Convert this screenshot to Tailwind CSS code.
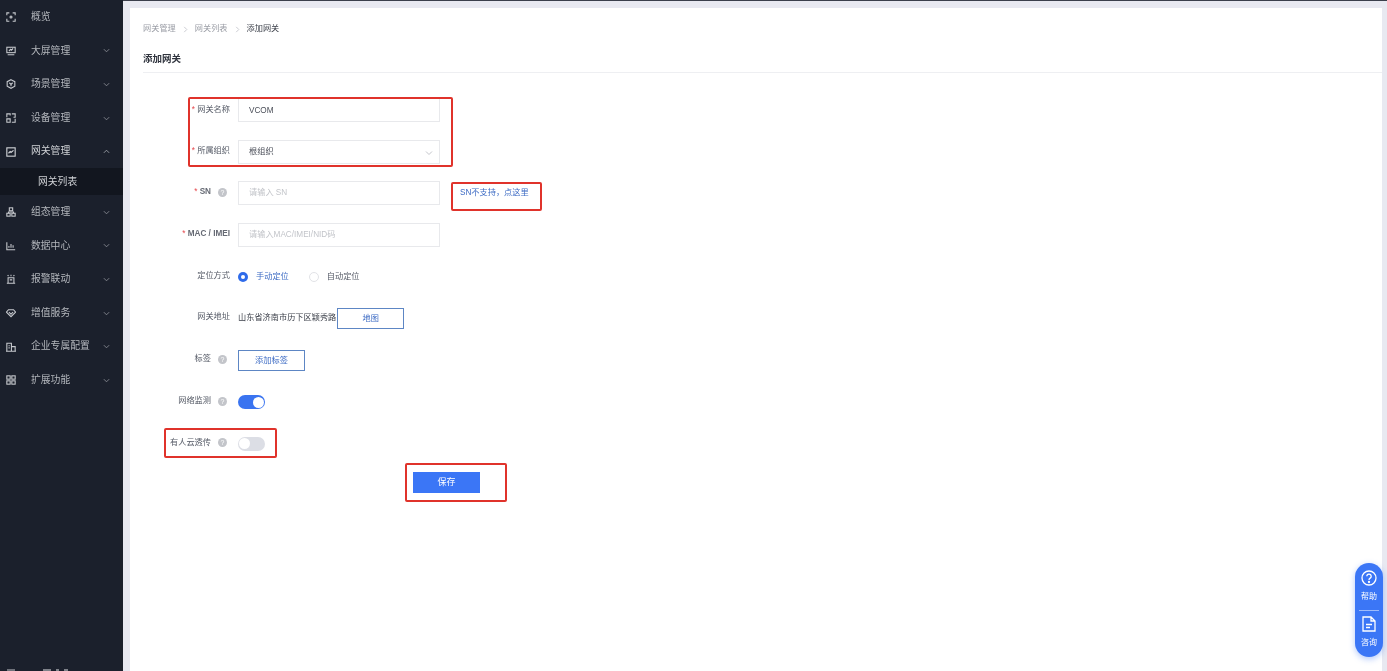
<!DOCTYPE html>
<html>
  <head>
    <meta charset="utf-8" />
    <title>添加网关</title>
    <script src="https://cdn.jsdelivr.net/npm/@tailwindcss/browser@4"></script>
  </head>
  <body class="overflow-hidden">
    <div id="app" class="relative flex h-[671px] w-[1387px] overflow-hidden bg-[#e8e9f1] text-[8.2px] text-[#555a66] blur-[0.35px] font-['Liberation_Sans','Noto_Sans_CJK_SC',sans-serif]">

      <!-- sidebar -->
      <div class="relative w-[123px] shrink-0 bg-[#1b202c] pt-[0.5px] text-[9.8px] text-[#b4b7bd]">
        <a class="flex h-[33.6px] items-center">
          <svg class="mx-[6px] h-[10px] w-[10px]" viewBox="0 0 12 12" fill="none" stroke="#c6c8cd" stroke-width="1.3"><path d="M1 4V1h3M8 1h3v3M11 8v3H8M4 11H1V8"/><circle cx="6" cy="6" r="1.2"/></svg>
          <span class="ml-[9px]">概览</span>
        </a>
        <a class="flex h-[33.6px] items-center">
          <svg class="mx-[6px] h-[10px] w-[10px]" viewBox="0 0 12 12" fill="none" stroke="#c6c8cd" stroke-width="1.3"><rect x="1" y="1.5" width="10" height="6.5"/><path d="M3.5 6l2-2 1 1 2-2M2 10.5h8"/></svg>
          <span class="ml-[9px]">大屏管理</span>
          <svg class="ml-auto mr-[13px] h-[7px] w-[7px]" viewBox="0 0 8 8" fill="none" stroke="#8b8e96"><path d="M1 2.5l3 3 3-3"/></svg>
        </a>
        <a class="flex h-[33.6px] items-center">
          <svg class="mx-[6px] h-[10px] w-[10px]" viewBox="0 0 12 12" fill="none" stroke="#c6c8cd" stroke-width="1.3"><path d="M6 .8l4.6 2.4v5.4L6 11.2 1.4 8.6V3.2z"/><path d="M4 4.5l2 2 2-2M6 6.5v2.2"/></svg>
          <span class="ml-[9px]">场景管理</span>
          <svg class="ml-auto mr-[13px] h-[7px] w-[7px]" viewBox="0 0 8 8" fill="none" stroke="#8b8e96"><path d="M1 2.5l3 3 3-3"/></svg>
        </a>
        <a class="flex h-[33.6px] items-center">
          <svg class="mx-[6px] h-[10px] w-[10px]" viewBox="0 0 12 12" fill="none" stroke="#c6c8cd" stroke-width="1.3"><path d="M1 5V1h4v2M7 1h4v4H9M1 7h4v4H1zM7 11h4V7"/></svg>
          <span class="ml-[9px]">设备管理</span>
          <svg class="ml-auto mr-[13px] h-[7px] w-[7px]" viewBox="0 0 8 8" fill="none" stroke="#8b8e96"><path d="M1 2.5l3 3 3-3"/></svg>
        </a>
        <a class="flex h-[33.6px] items-center">
          <svg class="mx-[6px] h-[10px] w-[10px]" viewBox="0 0 12 12" fill="none" stroke="#d6d8dc" stroke-width="1.3"><rect x="1" y="1" width="10" height="10"/><path d="M3 7.5l2-2 1 1 3-2.5"/></svg>
          <span class="ml-[9px] text-[#d0d2d6]">网关管理</span>
          <svg class="ml-auto mr-[13px] h-[7px] w-[7px]" viewBox="0 0 8 8" fill="none" stroke="#a4a7ae"><path d="M1 5.5l3-3 3 3"/></svg>
        </a>
        <a class="flex h-[27px] items-center bg-[#12161f] pl-[38px] text-[#d0d2d6]">网关列表</a>
        <a class="flex h-[33.6px] items-center">
          <svg class="mx-[6px] h-[10px] w-[10px]" viewBox="0 0 12 12" fill="none" stroke="#c6c8cd" stroke-width="1.3"><rect x="4" y="1" width="4" height="3.5"/><rect x="1" y="7.5" width="4" height="3.5"/><rect x="7" y="7.5" width="4" height="3.5"/><path d="M3 7.5V6h6v1.5"/></svg>
          <span class="ml-[9px]">组态管理</span>
          <svg class="ml-auto mr-[13px] h-[7px] w-[7px]" viewBox="0 0 8 8" fill="none" stroke="#8b8e96"><path d="M1 2.5l3 3 3-3"/></svg>
        </a>
        <a class="flex h-[33.6px] items-center">
          <svg class="mx-[6px] h-[10px] w-[10px]" viewBox="0 0 12 12" fill="none" stroke="#c6c8cd" stroke-width="1.3"><path d="M1 1.5V10.5H11M3.5 8V6M6 8V3.5M8.5 8V5"/></svg>
          <span class="ml-[9px]">数据中心</span>
          <svg class="ml-auto mr-[13px] h-[7px] w-[7px]" viewBox="0 0 8 8" fill="none" stroke="#8b8e96"><path d="M1 2.5l3 3 3-3"/></svg>
        </a>
        <a class="flex h-[33.6px] items-center">
          <svg class="mx-[6px] h-[10px] w-[10px]" viewBox="0 0 12 12" fill="none" stroke="#c6c8cd" stroke-width="1.3"><path d="M1 11h10M2.5 11V4.5h7V11M6 .8v1.8M2 1.2l1 1.4M10 1.2L9 2.6M4.5 7h3"/></svg>
          <span class="ml-[9px]">报警联动</span>
          <svg class="ml-auto mr-[13px] h-[7px] w-[7px]" viewBox="0 0 8 8" fill="none" stroke="#8b8e96"><path d="M1 2.5l3 3 3-3"/></svg>
        </a>
        <a class="flex h-[33.6px] items-center">
          <svg class="mx-[6px] h-[10px] w-[10px]" viewBox="0 0 12 12" fill="none" stroke="#c6c8cd" stroke-width="1.3"><path d="M3 2h6l2.5 3L6 10.5.5 5z"/><path d="M3.5 5L6 7.5 8.5 5"/></svg>
          <span class="ml-[9px]">增值服务</span>
          <svg class="ml-auto mr-[13px] h-[7px] w-[7px]" viewBox="0 0 8 8" fill="none" stroke="#8b8e96"><path d="M1 2.5l3 3 3-3"/></svg>
        </a>
        <a class="flex h-[33.6px] items-center">
          <svg class="mx-[6px] h-[10px] w-[10px]" viewBox="0 0 12 12" fill="none" stroke="#c6c8cd" stroke-width="1.3"><path d="M1 11V1.5h5.5V11M6.5 5.5H11V11M0 11h12M3 4.5h1.5M3 7h1.5"/></svg>
          <span class="ml-[9px]">企业专属配置</span>
          <svg class="ml-auto mr-[13px] h-[7px] w-[7px]" viewBox="0 0 8 8" fill="none" stroke="#8b8e96"><path d="M1 2.5l3 3 3-3"/></svg>
        </a>
        <a class="flex h-[33.6px] items-center">
          <svg class="mx-[6px] h-[10px] w-[10px]" viewBox="0 0 12 12" fill="none" stroke="#c6c8cd" stroke-width="1.3"><rect x="1" y="1" width="4" height="4"/><rect x="7" y="1" width="4" height="4"/><rect x="1" y="7" width="4" height="4"/><rect x="7" y="7" width="4" height="4"/></svg>
          <span class="ml-[9px]">扩展功能</span>
          <svg class="ml-auto mr-[13px] h-[7px] w-[7px]" viewBox="0 0 8 8" fill="none" stroke="#8b8e96"><path d="M1 2.5l3 3 3-3"/></svg>
        </a>

        <!-- footer of the sidebar, cut off by the window edge -->
        <div class="absolute left-[7px] top-[669px] flex items-start">
          <span class="h-[2px] w-[8px] bg-[#6f727b]"></span>
          <span class="ml-[28px] h-[2px] w-[8px] bg-[#7f828a]"></span>
          <span class="ml-[5px] h-[2px] w-[3px] bg-[#7f828a]"></span>
          <span class="ml-[5px] h-[2px] w-[4px] bg-[#7f828a]"></span>
        </div>
      </div>

      <!-- main -->
      <div class="flex-1 pl-[7px] pr-[5px] pt-[8px]">
        <div class="h-[663px] bg-white pl-[13px]">
          <div class="flex h-[38px] items-center gap-[6px] pt-[4px] text-[#9a9da5]">
            <span>网关管理</span>
            <svg class="h-[7px] w-[7px]" viewBox="0 0 8 8" fill="none" stroke="#c4c6cb"><path d="M2.5 1l3 3-3 3"/></svg>
            <span>网关列表</span>
            <svg class="h-[7px] w-[7px]" viewBox="0 0 8 8" fill="none" stroke="#c4c6cb"><path d="M2.5 1l3 3-3 3"/></svg>
            <span class="text-[#3a3e48]">添加网关</span>
          </div>
          <div class="flex h-[27px] items-center border-b border-[#eeeff2] pt-[1px] text-[9.5px] font-bold text-[#30343e]">添加网关</div>

          <!-- form -->
          <div class="mt-[16px] grid auto-rows-[41.75px] grid-cols-[87px_1fr] items-center gap-x-[8px]">
            <div class="text-right"><span class="text-[#e5484d]">* </span>网关名称</div>
            <div class="flex h-[24px] w-[202px] items-center border border-[#e8e9ec] px-[10px] pt-[2px] text-[#4a4e58]">VCOM</div>

            <div class="text-right"><span class="text-[#e5484d]">* </span>所属组织</div>
            <div class="flex h-[24px] w-[202px] items-center justify-between border border-[#e8e9ec] pl-[10px] pr-[6px] pt-[2px] text-[#4a4e58]">
              <span>根组织</span>
              <svg class="h-[8px] w-[8px]" viewBox="0 0 8 8" fill="none" stroke="#c4c6cb"><path d="M1 2.5l3 3 3-3"/></svg>
            </div>

            <div class="flex items-center justify-end gap-[7px] pb-[2px] pr-[3px]">
              <span><span class="text-[#e5484d]">* </span><b class="font-bold text-[#666a74]">SN</b></span>
              <span class="flex h-[9px] w-[9px] items-center justify-center rounded-full bg-[#c3c5ca] text-[7px] leading-none text-white">?</span>
            </div>
            <div class="flex items-center">
              <div class="flex h-[24px] w-[202px] items-center border border-[#e8e9ec] px-[10px] text-[#c2c4c9]">请输入 SN</div>
              <a class="ml-[20px] text-[#3d6bc4]">SN不支持，点这里</a>
            </div>

            <div class="pb-[2px] text-right"><span class="text-[#e5484d]">* </span><b class="font-bold text-[#666a74]">MAC / IMEI</b></div>
            <div class="flex h-[24px] w-[202px] items-center border border-[#e8e9ec] px-[10px] text-[#c2c4c9]">请输入MAC/IMEI/NID码</div>

            <div class="pb-[2px] text-right">定位方式</div>
            <div class="flex items-center">
              <span class="flex h-[10px] w-[10px] items-center justify-center rounded-full bg-[#2f6bea]"><span class="h-[4px] w-[4px] rounded-full bg-white"></span></span>
              <span class="ml-[8px] text-[#3d6bc4]">手动定位</span>
              <span class="ml-[20px] h-[10px] w-[10px] rounded-full border border-[#e2e3e7]"></span>
              <span class="ml-[8px]">自动定位</span>
            </div>

            <div class="pb-[2px] text-right">网关地址</div>
            <div class="flex items-center text-[#3a3e48]">
              <span>山东省济南市历下区颖秀路</span>
              <a class="ml-[1px] flex h-[21px] w-[67px] items-center justify-center border border-[#5d86c4] pt-[2px] text-[#3d6bc4]">地图</a>
            </div>

            <div class="flex items-center justify-end gap-[7px] pb-[2px] pr-[3px]">
              <span>标签</span>
              <span class="flex h-[9px] w-[9px] items-center justify-center rounded-full bg-[#c3c5ca] text-[7px] leading-none text-white">?</span>
            </div>
            <div><a class="flex h-[21px] w-[67px] items-center justify-center border border-[#5d86c4] pt-[1px] text-[#3d6bc4]">添加标签</a></div>

            <div class="flex items-center justify-end gap-[7px] pb-[2px] pr-[3px]">
              <span>网络监测</span>
              <span class="flex h-[9px] w-[9px] items-center justify-center rounded-full bg-[#c3c5ca] text-[7px] leading-none text-white">?</span>
            </div>
            <div class="flex h-[14px] w-[27px] items-center justify-end rounded-full bg-[#3a74f0] pr-[1px]"><span class="h-[11px] w-[11px] rounded-full bg-white"></span></div>

            <div class="flex items-center justify-end gap-[7px] pb-[2px] pr-[3px]">
              <span>有人云透传</span>
              <span class="flex h-[9px] w-[9px] items-center justify-center rounded-full bg-[#c3c5ca] text-[7px] leading-none text-white">?</span>
            </div>
            <div class="flex h-[14px] w-[27px] items-center rounded-full bg-[#dcdee5] pl-[1px]"><span class="h-[11px] w-[11px] rounded-full bg-white"></span></div>
          </div>

          <a class="ml-[270px] mt-[7px] flex h-[21px] w-[67px] items-center justify-center bg-[#3b76f6] text-[9px] text-white">保存</a>
        </div>
      </div>

      <!-- annotation boxes drawn over the form -->
      <div class="absolute left-[188px] top-[97px] h-[70px] w-[265px] rounded-[2px] border-2 border-[#e0332b]"></div>
      <div class="absolute left-[451px] top-[182px] h-[29px] w-[91px] rounded-[2px] border-2 border-[#e0332b]"></div>
      <div class="absolute left-[164px] top-[428px] h-[30px] w-[113px] rounded-[2px] border-2 border-[#e0332b]"></div>
      <div class="absolute left-[405px] top-[463px] h-[39px] w-[102px] rounded-[2px] border-2 border-[#e0332b]"></div>

      <!-- floating help -->
      <div class="absolute left-[1355px] top-[563px] flex h-[94px] w-[28px] flex-col items-center rounded-full bg-[#3b76f6] pt-[7px] text-[8px] text-white shadow-[0_2px_6px_rgba(59,118,246,0.4)]">
        <svg class="h-[16px] w-[16px]" viewBox="0 0 16 16" fill="none" stroke="#fff" stroke-width="1.3"><circle cx="8" cy="8" r="7"/><path d="M5.8 6.2a2.2 2.2 0 1 1 3.4 1.9c-.8.5-1.2 1-1.2 1.9"/><circle cx="8" cy="12" r=".5"/></svg>
        <span class="mt-[5px]">帮助</span>
        <span class="mt-[7px] h-px w-[20px] bg-white/50"></span>
        <svg class="mt-[5px] h-[16px] w-[14px]" viewBox="0 0 14 16" fill="none" stroke="#fff" stroke-width="1.3"><path d="M1 1h8l4 4v10H1zM9 1v4h4M4 8.5h6M4 11.5h4"/></svg>
        <span class="mt-[5px]">咨询</span>
      </div>

      <!-- top edge of the window -->
      <div class="absolute left-[123px] right-0 top-0 h-px bg-[#3b3f4c]"></div>
    </div>
  </body>
</html>
